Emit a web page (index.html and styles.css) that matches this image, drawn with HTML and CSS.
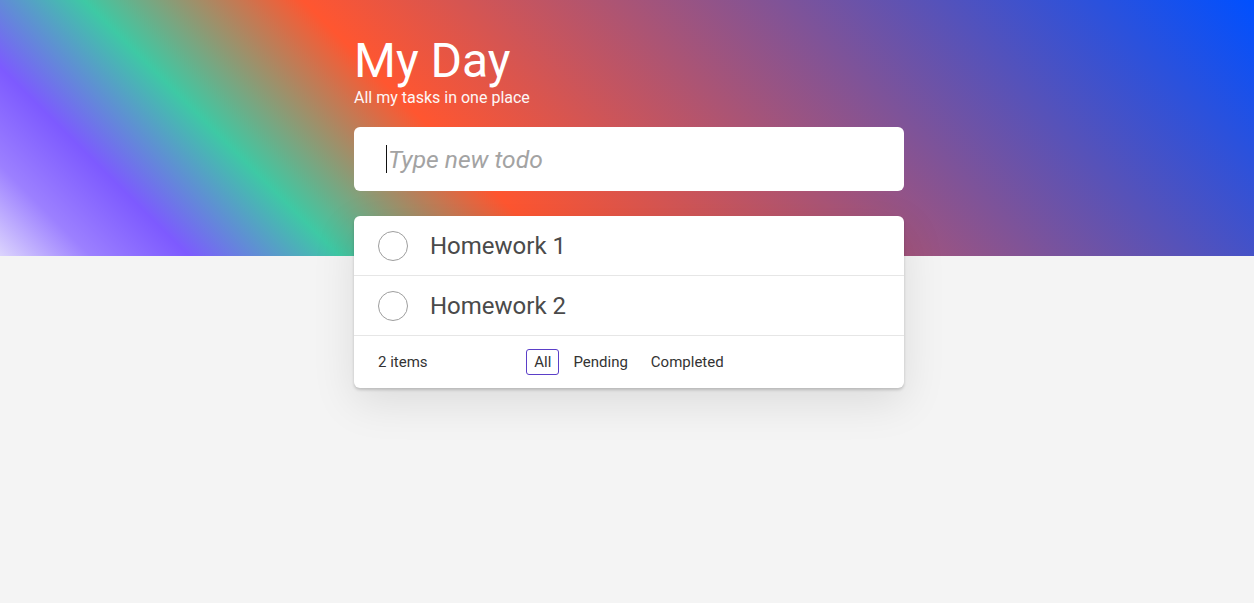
FILE: index.html
```html
<!DOCTYPE html>
<html lang="en">
<head>
<meta charset="utf-8">
<title>My Day</title>
<link rel="stylesheet" href="styles.css">
</head>
<body>
<header class="hero"></header>
<main class="page">
  <div class="app">
    <div class="heading">
      <h1 class="title">My Day</h1>
      <p class="subtitle">All my tasks in one place</p>
    </div>
    <div class="new-todo">
      <span class="caret"></span>
      <input class="new-input" type="text" placeholder="Type new todo">
    </div>
    <section class="list">
      <div class="item">
        <span class="check"></span>
        <span class="label">Homework 1</span>
      </div>
      <div class="item">
        <span class="check"></span>
        <span class="label">Homework 2</span>
      </div>
      <div class="footer">
        <span class="count">2 items</span>
        <div class="filters">
          <button class="filter active">All</button>
          <button class="filter">Pending</button>
          <button class="filter filter-last">Completed</button>
        </div>
        <span></span>
      </div>
    </section>
  </div>
</main>
</body>
</html>
```

FILE: styles.css
```css
* { box-sizing: border-box; }
html, body { margin: 0; padding: 0; }
body {
  background: #f4f4f4;
  font-family: Roboto, "Liberation Sans", Arial, sans-serif;
  min-height: 603px;
  position: relative;
}
.hero {
  height: 256px;
  background: linear-gradient(45deg, #dcd4fd 0%, #9c80ff 6%, #7d5aff 12.5%, #3ec9a4 22.5%, #ff5630 37%, #0050ff 100%);
}
.page {
  position: absolute;
  top: 0;
  left: 0;
  right: 0;
  display: flex;
  justify-content: center;
  padding-left: 4px;
}
.app {
  width: 550px;
  padding-top: 33px;
}
.title {
  margin: 0;
  font-size: 48px;
  font-weight: 400;
  line-height: 56px;
  color: #fff;
}
.subtitle {
  margin: 0;
  font-size: 16px;
  line-height: 18px;
  color: #fdf6f6;
}
.new-todo {
  margin-top: 20px;
  height: 64px;
  background: #fff;
  border-radius: 6px;
  display: flex;
  align-items: center;
  padding-left: 32px;
  position: relative;
}
.caret {
  position: absolute;
  left: 32px;
  top: 18px;
  width: 1px;
  height: 28px;
  background: #111;
}
.new-input {
  border: 0;
  outline: none;
  background: transparent;
  font-family: Roboto, "Liberation Sans", Arial, sans-serif;
  font-size: 24.6px;
  font-style: italic;
  color: #444;
  padding: 0 0 0 2px;
  width: 100%;
  height: 40px;
}
.new-input::placeholder {
  color: #a3a3a3;
  font-style: italic;
}
.list {
  margin-top: 25px;
  background: #fff;
  border-radius: 6px;
  box-shadow: 0 2px 3px rgba(0,0,0,0.18), 0 14px 44px rgba(0,0,0,0.1);
}
.item {
  height: 60px;
  border-bottom: 1px solid #e6e6e6;
  display: flex;
  align-items: center;
  padding-left: 24px;
}
.check {
  width: 30px;
  height: 30px;
  border: 1px solid #9e9e9e;
  border-radius: 50%;
  flex: none;
}
.label {
  margin-left: 22px;
  font-size: 24px;
  color: #4a4a4a;
}
.footer {
  height: 52px;
  display: grid;
  grid-template-columns: 1fr auto 1fr;
  align-items: center;
  padding: 0 24px;
}
.count {
  font-size: 15px;
  color: #333;
}
.filters {
  display: flex;
  gap: 6px;
}
.filter {
  font-family: Roboto, "Liberation Sans", Arial, sans-serif;
  font-size: 15px;
  color: #333;
  background: transparent;
  border: 1px solid transparent;
  border-radius: 3px;
  height: 26px;
  padding: 0 7px;
  cursor: pointer;
}
.filter-last {
  margin-left: 1px;
}
.filter.active {
  border-color: #5b3fc8;
}
```
